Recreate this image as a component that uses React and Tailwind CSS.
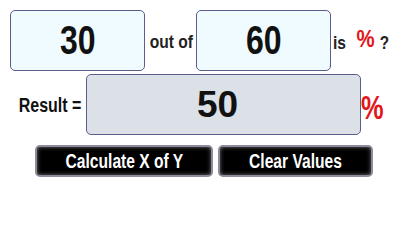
const font = { fontFamily: '"Liberation Sans", Arial, sans-serif' };

const NumberBox = ({ value, className }) => (
  <div
    className={`flex h-[61px] w-[135px] shrink-0 items-center justify-center rounded-[5px] border-[1.5px] border-[#5d5d8c] bg-[#effbff] ${className || ""}`}
  >
    <span className="inline-block scale-x-[0.78] text-[41px] leading-none font-bold text-[#111]">
      {value}
    </span>
  </div>
);

const DarkButton = ({ label, className }) => (
  <button
    className={`flex h-[32px] shrink-0 items-center justify-center rounded-[5px] border-[2px] border-[#8c8c9c] bg-black shadow-[inset_0_0_4px_rgba(255,255,255,0.45)] ${className}`}
  >
    <span className="inline-block scale-x-[0.78] text-[20px] leading-none font-bold whitespace-nowrap text-white">
      {label}
    </span>
  </button>
);

export default function App() {
  return (
    <div className="h-[200px] w-[400px] overflow-hidden bg-white" style={font}>
      {/* x out of y */}
      <div className="flex items-center pt-[10px] pl-[10px]">
        <NumberBox value="30" />
        <span className="mt-[2px] ml-[4px] flex w-[44px] shrink-0 justify-center">
          <span className="inline-block scale-x-[0.82] text-[19px] leading-none font-bold whitespace-nowrap text-[#222]">
            out of
          </span>
        </span>
        <NumberBox value="60" className="ml-[3px]" />
        <span className="mt-[4px] ml-[2px] inline-block origin-left scale-x-[0.82] text-[19px] leading-none font-bold text-[#222]">
          is
        </span>
        <span className="-mt-[3px] ml-[6px] inline-block scale-x-[0.85] text-[24px] leading-none font-bold text-[#e2161b]">
          %
        </span>
        <span className="mt-[4px] ml-[3px] inline-block scale-x-[0.85] text-[18px] leading-none font-bold text-[#222]">
          ?
        </span>
      </div>

      {/* result */}
      <div className="mt-[3px] flex items-center">
        <span className="flex w-[86px] justify-end pr-[5px]">
          <span className="inline-block origin-right scale-x-[0.8] text-[20px] leading-none font-bold whitespace-nowrap text-[#111]">
            Result =
          </span>
        </span>
        <div className="flex h-[61px] w-[275px] items-center justify-center rounded-[5px] border-[1.5px] border-[#5d5d8c] bg-[#dce1e8] pr-[12px]">
          <span className="inline-block text-[37px] leading-none font-bold text-[#111]">50</span>
        </div>
        <span className="mt-[6px] inline-block origin-left scale-x-[0.77] text-[33px] leading-none font-bold text-[#e2161b]">
          %
        </span>
      </div>

      {/* actions */}
      <div className="mt-[10px] flex gap-[5px] pl-[35px]">
        <DarkButton label="Calculate X of Y" className="w-[178px]" />
        <DarkButton label="Clear Values" className="w-[155px]" />
      </div>
    </div>
  );
}
